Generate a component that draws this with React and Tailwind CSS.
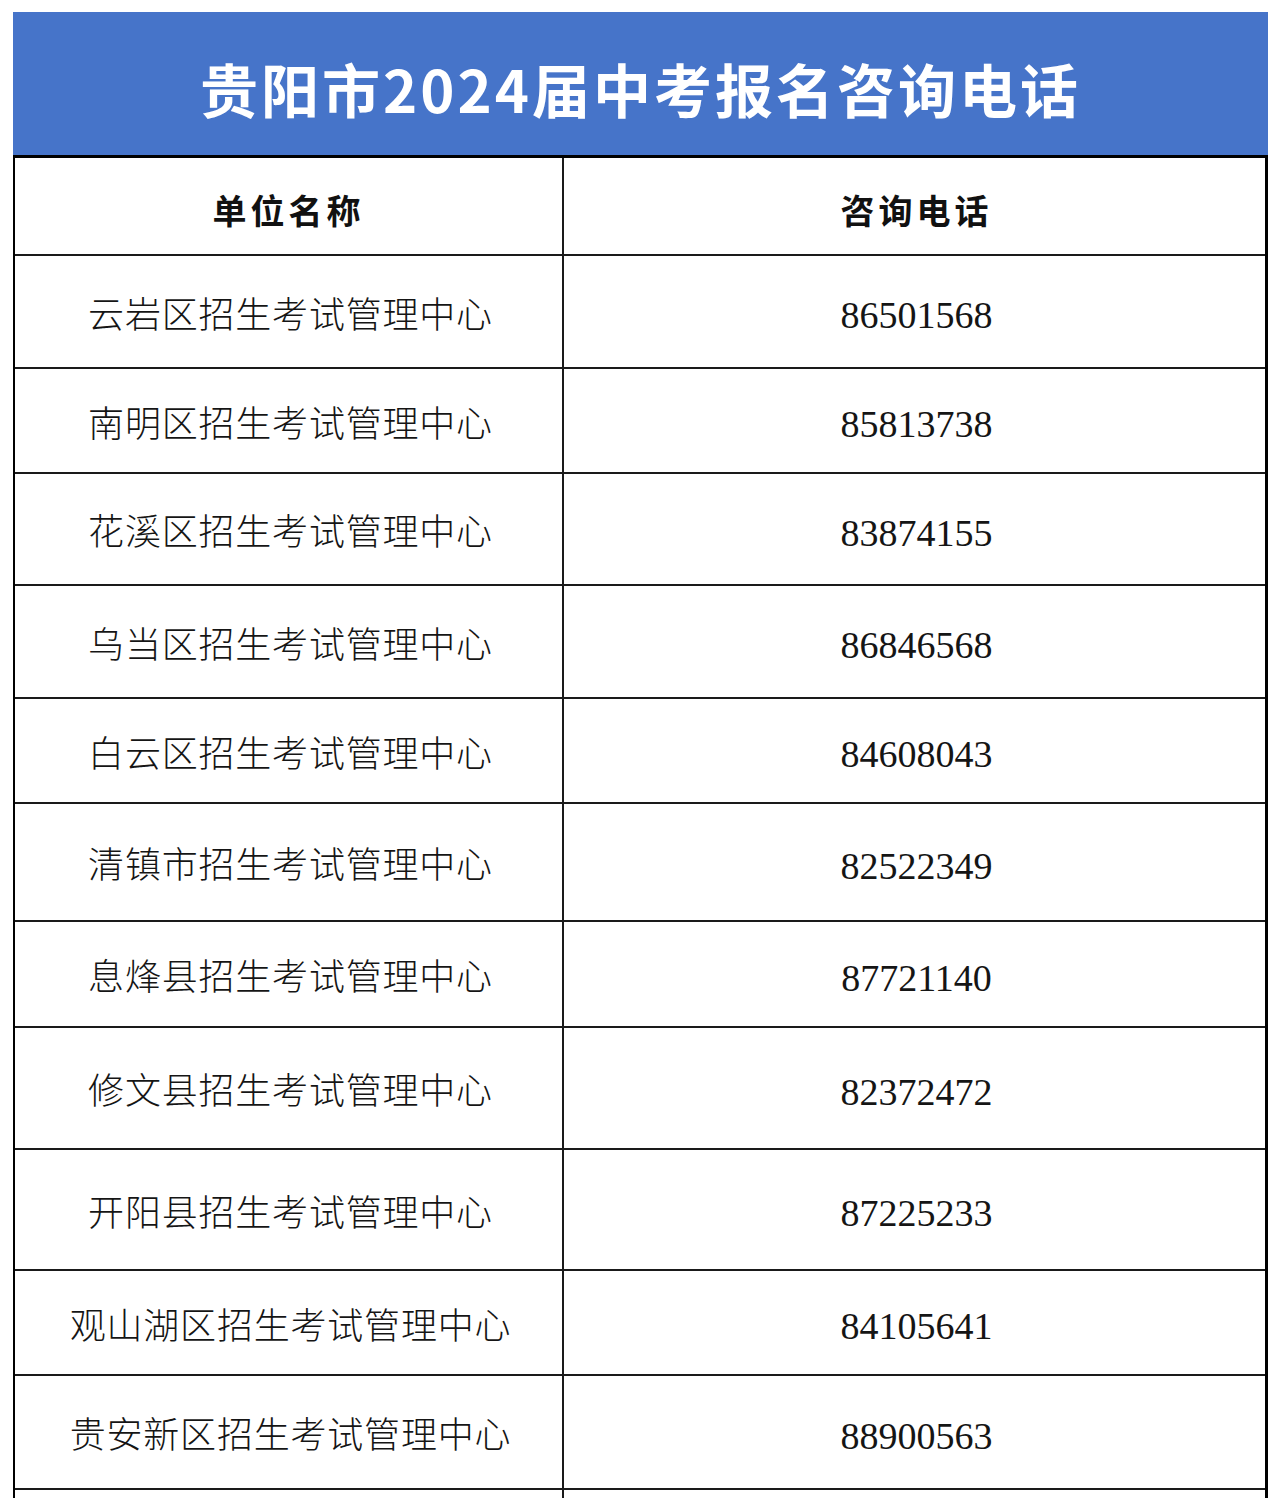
const rows = [
  { name: "云岩区招生考试管理中心", phone: "86501568", h: "h-[113px]" },
  { name: "南明区招生考试管理中心", phone: "85813738", h: "h-[105px]" },
  { name: "花溪区招生考试管理中心", phone: "83874155", h: "h-[112px]" },
  { name: "乌当区招生考试管理中心", phone: "86846568", h: "h-[113px]" },
  { name: "白云区招生考试管理中心", phone: "84608043", h: "h-[105px]" },
  { name: "清镇市招生考试管理中心", phone: "82522349", h: "h-[118px]" },
  { name: "息烽县招生考试管理中心", phone: "87721140", h: "h-[106px]" },
  { name: "修文县招生考试管理中心", phone: "82372472", h: "h-[122px]" },
  { name: "开阳县招生考试管理中心", phone: "87225233", h: "h-[121px]" },
  { name: "观山湖区招生考试管理中心", phone: "84105641", h: "h-[105px]" },
  { name: "贵安新区招生考试管理中心", phone: "88900563", h: "h-[114px]" },
];

const cjk = "font-['Liberation_Serif','Noto_Sans_CJK_SC',serif]";

// One table row: unit name on the left, phone on the right
const Row = ({ name, phone, h }) => (
  <div className={`grid grid-cols-[549px_1fr] border-b-2 border-[#1a1a1a] ${h}`}>
    <div className="flex items-center justify-center border-r-2 border-[#1a1a1a] pt-2 pl-1">
      <span className={`${cjk} font-light text-[36px] tracking-[0.8px] text-[#151515]`}>
        {name}
      </span>
    </div>
    <div className="flex items-center justify-center pt-2 pl-1">
      <span className="font-['Liberation_Serif',serif] text-[38px] text-[#151515]">
        {phone}
      </span>
    </div>
  </div>
);

export default function App() {
  return (
    <div className="bg-white min-h-[1498px] overflow-hidden pt-[12px]">
      <div className="ml-[13px] w-[1255px]">
        <div className="h-[143px] bg-[#4674c9] flex items-center justify-center pt-2">
          <h1 className="font-['Noto_Sans_CJK_SC',sans-serif] font-semibold text-white text-[58px] tracking-[3px] leading-none">
            贵阳市2024届中考报名咨询电话
          </h1>
        </div>
        <div className="border-t-[3px] border-l-2 border-r-[3px] border-black">
          <div className="grid grid-cols-[549px_1fr] h-[98px] border-b-2 border-[#1a1a1a]">
            <div className="flex items-center justify-center border-r-2 border-[#1a1a1a] pt-3">
              <span className={`${cjk} font-semibold text-[34px] tracking-[4px] text-[#111]`}>
                单位名称
              </span>
            </div>
            <div className="flex items-center justify-center pt-3 pl-1">
              <span className={`${cjk} font-semibold text-[34px] tracking-[4px] text-[#111]`}>
                咨询电话
              </span>
            </div>
          </div>
          {rows.map((r) => (
            <Row key={r.name} {...r} />
          ))}
          <div className="grid grid-cols-[549px_1fr] h-[40px]">
            <div className="border-r-2 border-[#1a1a1a]" />
            <div />
          </div>
        </div>
      </div>
    </div>
  );
}
